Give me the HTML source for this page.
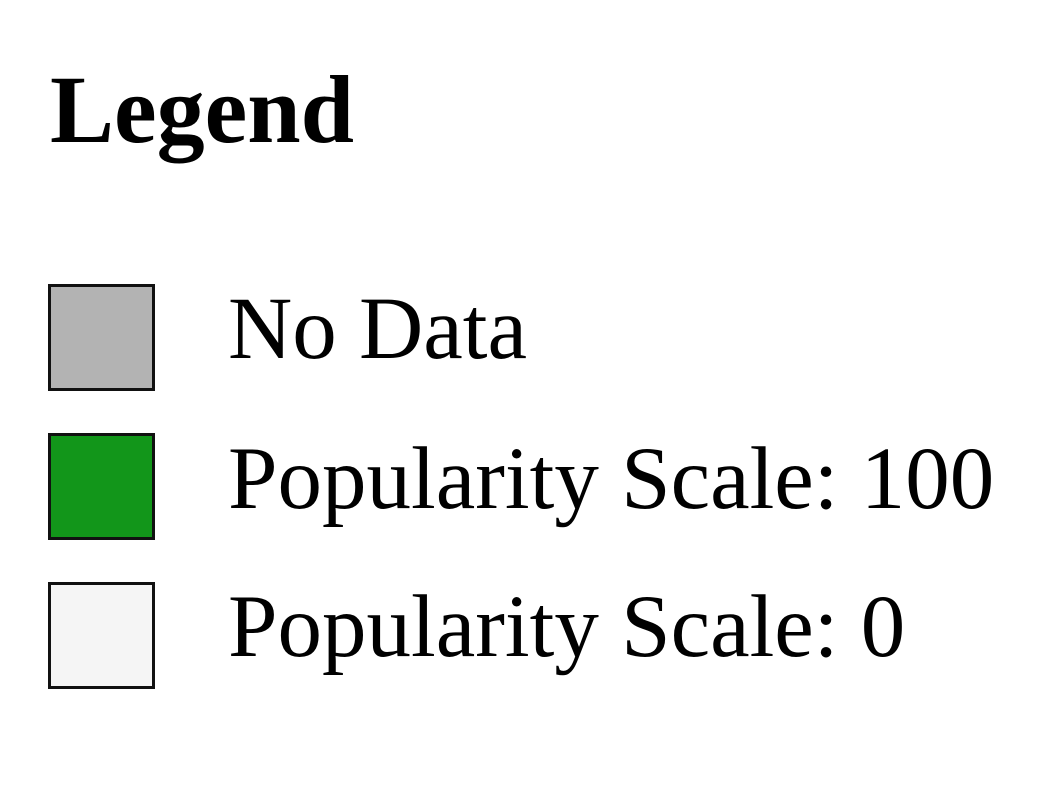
<!DOCTYPE html>
<html><head><meta charset="utf-8"><style>
html,body{margin:0;padding:0;background:#fff;width:1049px;height:800px;overflow:hidden}
body{position:relative;font-family:"Liberation Serif",serif;color:#000}
.t{position:absolute;line-height:1;white-space:nowrap;font-size:89px}
.h{position:absolute;left:50px;top:62px;font-size:96px;font-weight:bold;line-height:1}
.b{position:absolute;left:48px;width:101px;height:101px;border:3px solid #111}
</style></head><body>
<div class="h">Legend</div>
<div class="b" style="top:284px;background:#b3b3b3"></div>
<div class="b" style="top:433px;background:#12961a"></div>
<div class="b" style="top:582px;background:#f5f5f5"></div>
<div class="t" style="left:228px;top:285px">No Data</div>
<div class="t" style="left:228px;top:435px">Popularity Scale: 100</div>
<div class="t" style="left:228px;top:583px">Popularity Scale: 0</div>
</body></html>
